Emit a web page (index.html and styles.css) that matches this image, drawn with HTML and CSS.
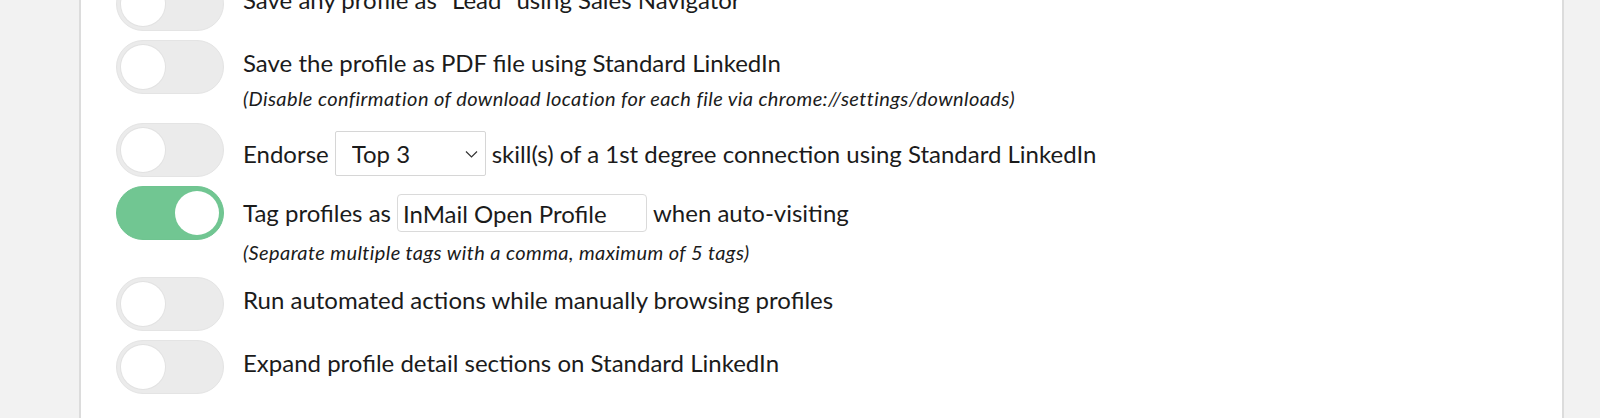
FILE: index.html
```html
<!DOCTYPE html>
<html lang="en">

<head>
  <meta charset="UTF-8">
  <meta name="viewport" content="width=device-width, initial-scale=1.0">
  <title>Profile settings</title>
  <link rel="stylesheet" href="styles.css">
</head>

<body>
  <div class="page">
    <div class="card">

      <div class="setting">
        <label class="switch"><input type="checkbox"><span class="slider"></span></label>
        <div class="setting-body">
          <div class="setting-line">Save any profile as "Lead" using Sales Navigator</div>
        </div>
      </div>

      <div class="setting">
        <label class="switch"><input type="checkbox"><span class="slider"></span></label>
        <div class="setting-body">
          <div class="setting-line">Save the profile as PDF file using Standard LinkedIn</div>
          <div class="setting-hint">(Disable confirmation of download location for each file via chrome://settings/downloads)</div>
        </div>
      </div>

      <div class="setting">
        <label class="switch"><input type="checkbox"><span class="slider"></span></label>
        <div class="setting-body">
          <div class="setting-line">
            <span>Endorse</span>
            <div class="select-wrap">
              <select class="select">
                <option>Top 3</option>
                <option>Top 5</option>
                <option>All</option>
              </select>
              <svg class="chevron" width="13" height="8" viewBox="0 0 13 8"><path d="M1 1.5l5.5 5.5 5.5-5.5" fill="none" stroke="#333" stroke-width="1.2"/></svg>
            </div>
            <span>skill(s) of a 1st degree connection using Standard LinkedIn</span>
          </div>
        </div>
      </div>

      <div class="setting">
        <label class="switch"><input type="checkbox" checked><span class="slider"></span></label>
        <div class="setting-body">
          <div class="setting-line">
            <span>Tag profiles as</span>
            <input class="tag-input" type="text" value="InMail Open Profile">
            <span>when auto-visiting</span>
          </div>
          <div class="setting-hint">(Separate multiple tags with a comma, maximum of 5 tags)</div>
        </div>
      </div>

      <div class="setting">
        <label class="switch"><input type="checkbox"><span class="slider"></span></label>
        <div class="setting-body">
          <div class="setting-line">Run automated actions while manually browsing profiles</div>
        </div>
      </div>

      <div class="setting">
        <label class="switch"><input type="checkbox"><span class="slider"></span></label>
        <div class="setting-body">
          <div class="setting-line">Expand profile detail sections on Standard LinkedIn</div>
        </div>
      </div>

    </div>
  </div>
</body>

</html>
```

FILE: styles.css
```css
* {
  margin: 0px;
  padding: 0px;
  box-sizing: border-box;
  font-family: Lato, 'Open Sans', sans-serif;
}

html,
body {
  height: 100%;
  background: #f2f2f2;
  overflow: hidden;
}

.page {
  padding: 0 36px 0 79px;
}

.card {
  margin-top: -23px;
  min-height: calc(100vh + 23px);
  background: #fff;
  border-left: 2px solid #dcdcdc;
  border-right: 2px solid #dcdcdc;
  padding-left: 35px;
  display: flex;
  flex-direction: column;
  gap: 9px;
  color: #1b1b1b;
}

.setting {
  display: flex;
  align-items: flex-start;
  gap: 19px;
}

.switch {
  position: relative;
  flex: 0 0 108px;
  height: 54px;
  cursor: pointer;
}

.switch input {
  display: none;
}

.slider {
  position: absolute;
  inset: 0;
  background: #ebebeb;
  border: 1px solid #e4e4e4;
  border-radius: 27px;
}

.slider::before {
  content: "";
  position: absolute;
  top: 4px;
  left: 4px;
  width: 44px;
  height: 44px;
  border-radius: 50%;
  background: #fff;
  box-shadow: 0 0 0 1px #e2e2e2;
}

.switch input:checked + .slider {
  background: #71c692;
  border-color: #6fc490;
}

.switch input:checked + .slider::before {
  left: 58px;
  box-shadow: none;
}

.setting-body {
  padding-top: 8px;
}

.setting-line {
  display: flex;
  align-items: center;
  gap: 6px;
  font-size: 24px;
  line-height: 30px;
}

.setting-hint {
  margin: 8px 0 4px;
  font-size: 20px;
  line-height: 24px;
  font-style: italic;
  letter-spacing: 0.4px;
}

.select-wrap {
  position: relative;
}

.select {
  appearance: none;
  width: 151px;
  height: 45px;
  padding-left: 16px;
  border: 1px solid #d6d6d6;
  border-radius: 2px;
  background: #fff;
  font-size: 24px;
  color: #1b1b1b;
}

.chevron {
  position: absolute;
  right: 8px;
  top: 19px;
  pointer-events: none;
}

.tag-input {
  width: 250px;
  height: 38px;
  padding: 0 5px;
  border: 1px solid #dadada;
  border-radius: 4px;
  font-size: 24px;
  color: #1b1b1b;
}
```
